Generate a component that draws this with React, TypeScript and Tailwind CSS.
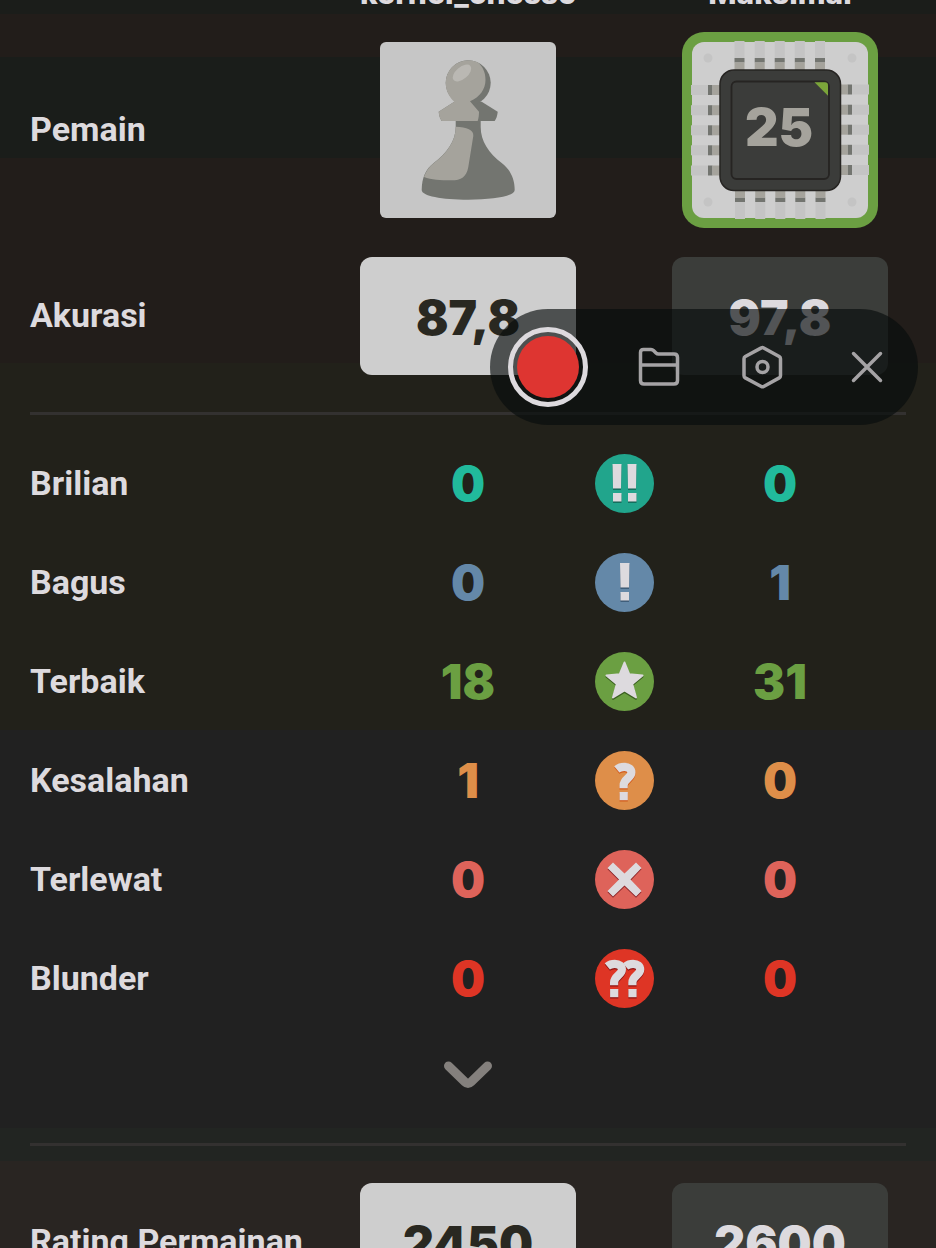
import React from 'react';

type BadgeKind = 'brilliant' | 'great' | 'best' | 'mistake' | 'miss' | 'blunder';

interface MoveRow {
  label: string;
  kind: BadgeKind;
  left: number;
  right: number;
  color: string;
}

const MOVES: MoveRow[] = [
  { label: 'Brilian', kind: 'brilliant', left: 0, right: 0, color: 'text-[#21ba9c]' },
  { label: 'Bagus', kind: 'great', left: 0, right: 1, color: 'text-[#6488a8]' },
  { label: 'Terbaik', kind: 'best', left: 18, right: 31, color: 'text-[#6b9f42]' },
  { label: 'Kesalahan', kind: 'mistake', left: 1, right: 0, color: 'text-[#de8e49]' },
  { label: 'Terlewat', kind: 'miss', left: 0, right: 0, color: 'text-[#de635a]' },
  { label: 'Blunder', kind: 'blunder', left: 0, right: 0, color: 'text-[#de3525]' },
];

// Hook and dot of the mistake marks, drawn with the current colour
function Hook() {
  return (
    <>
      <path
        d="M21.800 18.300C24 16.500 26.500 15.800 29.300 15.800c4.500 0 7.100 2.300 7.100 5.700 0 5.500-7.800 6.500-7.800 13v2.700"
        fill="none"
        stroke="currentColor"
        strokeWidth="8.200"
      />
      <rect x="24.600" y="41" width="8.200" height="8.200" fill="currentColor" />
    </>
  );
}

const BADGES: Record<BadgeKind, { fill: string; shade: string; glyph: React.ReactNode }> = {
  brilliant: {
    fill: '#21a58c',
    shade: '#0f5e4f',
    glyph: <path d="M17.500 10h9l-.5 24.500h-8zM18 39h8.500v8.500H18zM32.500 10h9l-.5 24.500h-8zM33 39h8.500v8.500H33z" />,
  },
  great: {
    fill: '#6488a8',
    shade: '#34506b',
    glyph: <path d="M25 10h9.500l-.5 24.500h-8.500zM25.500 39h8.500v8.500h-8.500z" />,
  },
  best: {
    fill: '#6b9f42',
    shade: '#3a5f20',
    glyph: (
      <path
        d="M29.500 10.500l4.700 11.700 13.300 1.300-10.300 8.500 3.800 13.500-11.500-7-11.500 7L21.800 32 11.500 23.500l13.300-1.300z"
        stroke="currentColor"
        strokeWidth="2"
        strokeLinejoin="round"
      />
    ),
  },
  mistake: {
    fill: '#de8e49',
    shade: '#d25a1c',
    glyph: <Hook />,
  },
  miss: {
    fill: '#de635a',
    shade: '#8c2328',
    glyph: <path d="M29.500 23.500 41 12.500l5.500 5.500L35.500 29.500 46.500 41 41 46.500 29.500 35.500 18 46.500 12.500 41l11.500-11.500L12.500 18l5.500-5.500z" />,
  },
  blunder: {
    fill: '#de3525',
    shade: '#8c1414',
    glyph: (
      <>
        <g transform="translate(-9.500 -1)">
          <Hook />
        </g>
        <g transform="translate(8.800 -1)">
          <Hook />
        </g>
      </>
    ),
  },
};

function Badge({ kind }: { kind: BadgeKind }) {
  const { fill, shade, glyph } = BADGES[kind];
  return (
    <svg viewBox="0 0 59 59" className="mx-auto block size-[59px]" aria-hidden="true">
      <circle cx="29.500" cy="29.500" r="29.500" fill={fill} />
      <g fill="currentColor" color={shade} transform="translate(0 1.300)">
        {glyph}
      </g>
      <g fill="currentColor" color="#dddade">
        {glyph}
      </g>
    </svg>
  );
}

function PawnAvatar() {
  return (
    <svg viewBox="0 0 176 176" className="mx-auto block size-[176px] rounded-md bg-[#c6c6c6]" role="img" aria-label="kernel_chesso">
      {/* Body */}
      <path
        d="M75.700 79h25v6c0 14 8 26 21 36 8 6 13 15 13 27 0 6-20 9.700-46.500 9.700S41.700 154 41.700 148c0-12 4-21 12-27 13-10 22-22 22-36z"
        fill="#737570"
      />
      <path d="M75.700 84.700c11 .3 18.300 3 17.600 9.300l-5 31c-1.800 10-7 13.300-17 13.300-11 0-20-.6-27.300-3.300 2-6 5.500-10.500 10-14 13-10 21.700-22 21.700-36z" fill="#a5a39c" />
      {/* Collar and head */}
      <path d="M74.300 59.700 58.700 69.700c.3 4 1.300 6.800 3 9.300h53c1.700-2.500 2.700-5.300 3-9.300L101.700 59.700z" fill="#737570" />
      <circle cx="88.200" cy="40.800" r="22.500" fill="#737570" />
      <path d="M74.300 59.700 58.700 69.700c.3 4 1.300 6.800 3 9.300h36c1-3 1.300-6 1.300-9.300L90 59.300C100 55 105.500 47 105.500 38c0-8-3-13.500-7.500-17.400A22.500 22.500 0 0 0 65.700 40.800c0 8 3.600 14.500 8.600 18.900z" fill="#a5a39c" />
      <ellipse cx="82" cy="31" rx="11" ry="6" transform="rotate(-40 82 31)" fill="#bab8b3" />
    </svg>
  );
}

const PINS = [42.500, 62.700, 82.700, 102.800, 123];

function BotAvatar() {
  return (
    <div className="mx-auto size-[196px] rounded-[22px] bg-[#6b9f42] p-[10px]">
      <svg viewBox="0 0 176 176" className="block size-full overflow-visible" role="img" aria-label="Maksimal">
        <rect width="176" height="176" rx="12" fill="#cecece" />
        {[16, 160].map((cx) =>
          [16, 160].map((cy) => <circle key={`${cx}-${cy}`} cx={cx} cy={cy} r="4.500" fill="#c4c4c4" />)
        )}
        {[0, 90, 180, 270].map((angle) => (
          <g key={angle} transform={`rotate(${angle} 88 88)`}>
            {PINS.map((x) => (
              <g key={x}>
                <rect x={x} y="-1" width="10" height="17" fill="#c4c4c4" />
                <rect x={x} y="16" width="10" height="4.500" fill="#737570" />
                <rect x={x} y="20.500" width="10" height="8" fill="#a5a39c" />
              </g>
            ))}
          </g>
        ))}
        <rect x="28" y="28" width="120.500" height="120.500" rx="14" fill="#3b3c3a" stroke="#262422" strokeWidth="1.500" />
        <rect x="39.500" y="39.500" width="97.500" height="97.500" rx="5" fill="#3b3c3a" stroke="#262422" strokeWidth="1.800" />
        <path d="M122.500 40.200h10.500q3 0 3 3v10.500z" fill="#7ba53a" />
        <text x="87" y="104" textAnchor="middle" fontSize="52" fill="#a5a39c" className="font-[Inter,sans-serif] font-black">
          25
        </text>
      </svg>
    </div>
  );
}

function Label({ children }: { children: React.ReactNode }) {
  return (
    <th scope="row" className="pb-0.5 text-left text-[34px] leading-10 font-bold text-[#dddade]">
      {children}
    </th>
  );
}

function ScoreBox({ value, dark = false }: { value: string; dark?: boolean }) {
  return (
    <div
      className={`flex h-[118px] items-center justify-center rounded-xl pt-1 font-[Inter,sans-serif] text-5xl font-black ${
        dark ? 'bg-[#3b3d3a] text-[#dddade]' : 'bg-[#cecece] text-[#292821]'
      }`}
    >
      {value}
    </div>
  );
}

function Divider() {
  return (
    <tr>
      <td colSpan={4} className="py-[19px]">
        <hr className="border-t-[3px] border-[#333130]" />
      </td>
    </tr>
  );
}

function RecorderBar() {
  return (
    <div className="absolute top-[309px] right-[18px] flex h-[116px] items-center rounded-full bg-[#080d0d]/65 pr-[30px] pl-[18px] text-[#a5a3a5]">
      <button type="button" aria-label="Rekam" className="mr-[50px] size-20 rounded-full border-[5px] border-[#dddade] p-1">
        <span className="block size-full rounded-full bg-[#de3531]" />
      </button>
      <div className="flex items-center gap-[62px]">
        <button type="button" aria-label="Folder">
          <svg viewBox="0 0 42 42" className="size-[42px]" fill="none" stroke="currentColor" strokeWidth="3.500" strokeLinejoin="round">
            <path d="M2.500 6.500q0-3 3-3h7.500q1.500 0 2.500 1l2.500 2.500q1 1 2.500 1H36q3.500 0 3.500 3.500v23q0 3.500-3.500 3.500H6q-3.500 0-3.500-3.500zM2.500 19h37" />
          </svg>
        </button>
        <button type="button" aria-label="Pengaturan">
          <svg viewBox="0 0 42 42" className="size-[42px] overflow-visible" fill="none" stroke="currentColor" strokeWidth="3.500" strokeLinejoin="round">
            <path d="M19.300 1.900q1.200-.7 2.400 0l15.500 8.600q1.300.8 1.300 2.200v17q0 1.400-1.300 2.200l-15.500 8.600q-1.200.7-2.400 0L3.300 31.900Q2 31.100 2 29.700v-17q0-1.400 1.300-2.200z" />
            <circle cx="20.500" cy="21" r="5.500" />
          </svg>
        </button>
        <button type="button" aria-label="Tutup">
          <svg viewBox="0 0 42 42" className="size-[42px]" fill="none" stroke="currentColor" strokeWidth="3.500" strokeLinecap="round">
            <path d="M7.500 7.500l27 27M34.500 7.500l-27 27" />
          </svg>
        </button>
      </div>
    </div>
  );
}

export default function App() {
  return (
    <main className="relative h-screen overflow-hidden bg-[linear-gradient(#1b1d1a_14px,#221d1a_14px_57px,#1a1d1a_57px_158px,#221d1a_158px_363px,#22211a_363px_730px,#212121_730px_1128px,#222522_1128px_1161px,#292522_1161px)] px-[30px] font-[Roboto,sans-serif]">
      <table className="-mt-7 w-full table-fixed border-collapse">
        <colgroup>
          <col />
          <col className="w-[216px]" />
          <col className="w-24" />
          <col className="w-[234px]" />
        </colgroup>
        <thead>
          <tr className="h-12 align-top font-[Inter,sans-serif] text-[30px] leading-[42px] whitespace-nowrap text-[#dddade]">
            <td />
            <th scope="col" className="font-extrabold">kernel_chesso</th>
            <td />
            <th scope="col" className="pr-[18px] font-extrabold">Maksimal</th>
          </tr>
        </thead>
        <tbody>
          <tr className="h-[219px]">
            <Label>Pemain</Label>
            <td>
              <PawnAvatar />
            </td>
            <td />
            <td className="pr-[18px]">
              <BotAvatar />
            </td>
          </tr>
          <tr>
            <Label>Akurasi</Label>
            <td className="py-[18px]">
              <ScoreBox value="87,8" />
            </td>
            <td />
            <td className="pr-[18px]">
              <ScoreBox value="97,8" dark />
            </td>
          </tr>
          <Divider />
          {MOVES.map((move) => (
            <tr key={move.kind} className="h-[99px]">
              <Label>{move.label}</Label>
              <td className={`text-center font-[Inter,sans-serif] text-5xl font-black ${move.color}`}>{move.left}</td>
              <td>
                <Badge kind={move.kind} />
              </td>
              <td className={`pr-[18px] text-center font-[Inter,sans-serif] text-5xl font-black ${move.color}`}>{move.right}</td>
            </tr>
          ))}
          <tr className="h-24">
            <td colSpan={4} className="text-center">
              <button type="button" aria-label="Tampilkan lainnya" className="align-middle">
                <svg viewBox="0 0 50 30" className="block h-[30px] w-[50px]" fill="none" stroke="#84807d" strokeWidth="9" strokeLinejoin="round" strokeLinecap="round">
                  <path d="M5.500 5 22 21q3 2.800 6 0L44.500 5" />
                </svg>
              </button>
            </td>
          </tr>
          <Divider />
          <tr>
            <Label>Rating Permainan</Label>
            <td className="py-[18px]">
              <ScoreBox value="2450" />
            </td>
            <td />
            <td className="pr-[18px]">
              <ScoreBox value="2600" dark />
            </td>
          </tr>
        </tbody>
      </table>
      <RecorderBar />
    </main>
  );
}
